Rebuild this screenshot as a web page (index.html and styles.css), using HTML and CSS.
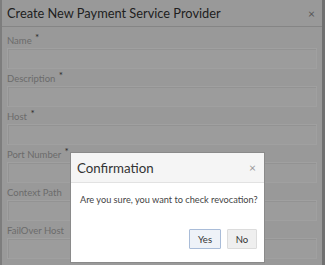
FILE: index.html
```html
<!DOCTYPE html>
<html>
<head>
<meta charset="utf-8">
<link rel="stylesheet" href="styles.css">
</head>
<body>
<div class="dialog">
  <div class="dialog-header">
    <span class="dialog-title">Create New Payment Service Provider</span>
    <span class="close">×</span>
  </div>
  <div class="dialog-body">
    <div class="field"><label>Name <span class="req">*</span></label><div class="input"></div></div>
    <div class="field"><label>Description <span class="req">*</span></label><div class="input"></div></div>
    <div class="field"><label>Host <span class="req">*</span></label><div class="input"></div></div>
    <div class="field"><label>Port Number <span class="req">*</span></label><div class="input"></div></div>
    <div class="field"><label>Context Path</label><div class="input"></div></div>
    <div class="field"><label>FailOver Host</label><div class="input"></div></div>
  </div>
</div>
<div class="overlay"></div>
<div class="modal">
  <div class="modal-header">
    <span class="modal-title">Confirmation</span>
    <span class="modal-close">×</span>
  </div>
  <div class="modal-body">Are you sure, you want to check revocation?</div>
  <div class="modal-footer">
    <button class="btn btn-primary">Yes</button>
    <button class="btn">No</button>
  </div>
</div>
</body>
</html>
```
FILE: styles.css
```css
html, body {
  margin: 0;
  padding: 0;
  height: 100%;
  overflow: hidden;
}
body {
  font-family: Lato, "Open Sans", sans-serif;
  background: #f2f2f2;
}
.dialog {
  box-sizing: border-box;
  width: 325px;
  height: 265px;
  background: #f0f0f0;
  border-left: 2px solid #c4c4c4;
  border-right: 3px solid #b0b0b0;
}
.dialog-header {
  height: 26px;
  border-bottom: 1px solid #d0d0d0;
  display: flex;
  align-items: center;
  justify-content: space-between;
  padding: 0 7px 0 5px;
}
.dialog-title {
  font-size: 12.8px;
  color: #333;
}
.close {
  font-size: 12px;
  color: #888;
}
.dialog-body {
  padding: 6px 5px 0 5px;
  display: flex;
  flex-direction: column;
  gap: 2px;
}
.field {
  display: flex;
  flex-direction: column;
}
.field label {
  font-size: 9.5px;
  line-height: 15px;
  height: 15px;
  color: #a8a8a8;
}
.req {
  color: #444;
  font-size: 10px;
  position: relative;
  top: -3px;
  margin-left: 1px;
}
.input {
  height: 19px;
  border: 1px solid #fafafa;
  background: #f4f4f4;
  box-shadow: inset 1px 1px 0 #e6e6e6;
}
.overlay {
  position: absolute;
  inset: 0;
  background: rgba(0, 0, 0, 0.36);
}
.modal {
  position: absolute;
  left: 70px;
  top: 152px;
  width: 195px;
  height: 111px;
  box-sizing: border-box;
  background: #fff;
  border: 1px solid #8a8a8a;
  display: flex;
  flex-direction: column;
}
.modal-header {
  height: 30px;
  box-sizing: border-box;
  background: #f5f5f5;
  border-bottom: 1px solid #e2e2e2;
  display: flex;
  align-items: center;
  justify-content: space-between;
  padding: 0 8px 0 6px;
}
.modal-title {
  font-size: 13.3px;
  color: #333;
}
.modal-close {
  font-size: 12px;
  color: #999;
}
.modal-body {
  font-size: 9.2px;
  color: #444;
  padding: 11px 0 0 9px;
  flex: 1;
  white-space: nowrap;
}
.modal-footer {
  display: flex;
  justify-content: flex-end;
  gap: 6px;
  padding: 0 7px 13px 0;
}
.btn {
  font-family: Lato, "Open Sans", sans-serif;
  font-size: 9.5px;
  color: #333;
  height: 20px;
  width: 30px;
  padding: 0;
  background: #efefef;
  border: 1px solid #dcdcdc;
  border-radius: 1px;
}
.btn-primary {
  width: 32px;
  background: #eef2f8;
  border-color: #a9bcd8;
}
```
